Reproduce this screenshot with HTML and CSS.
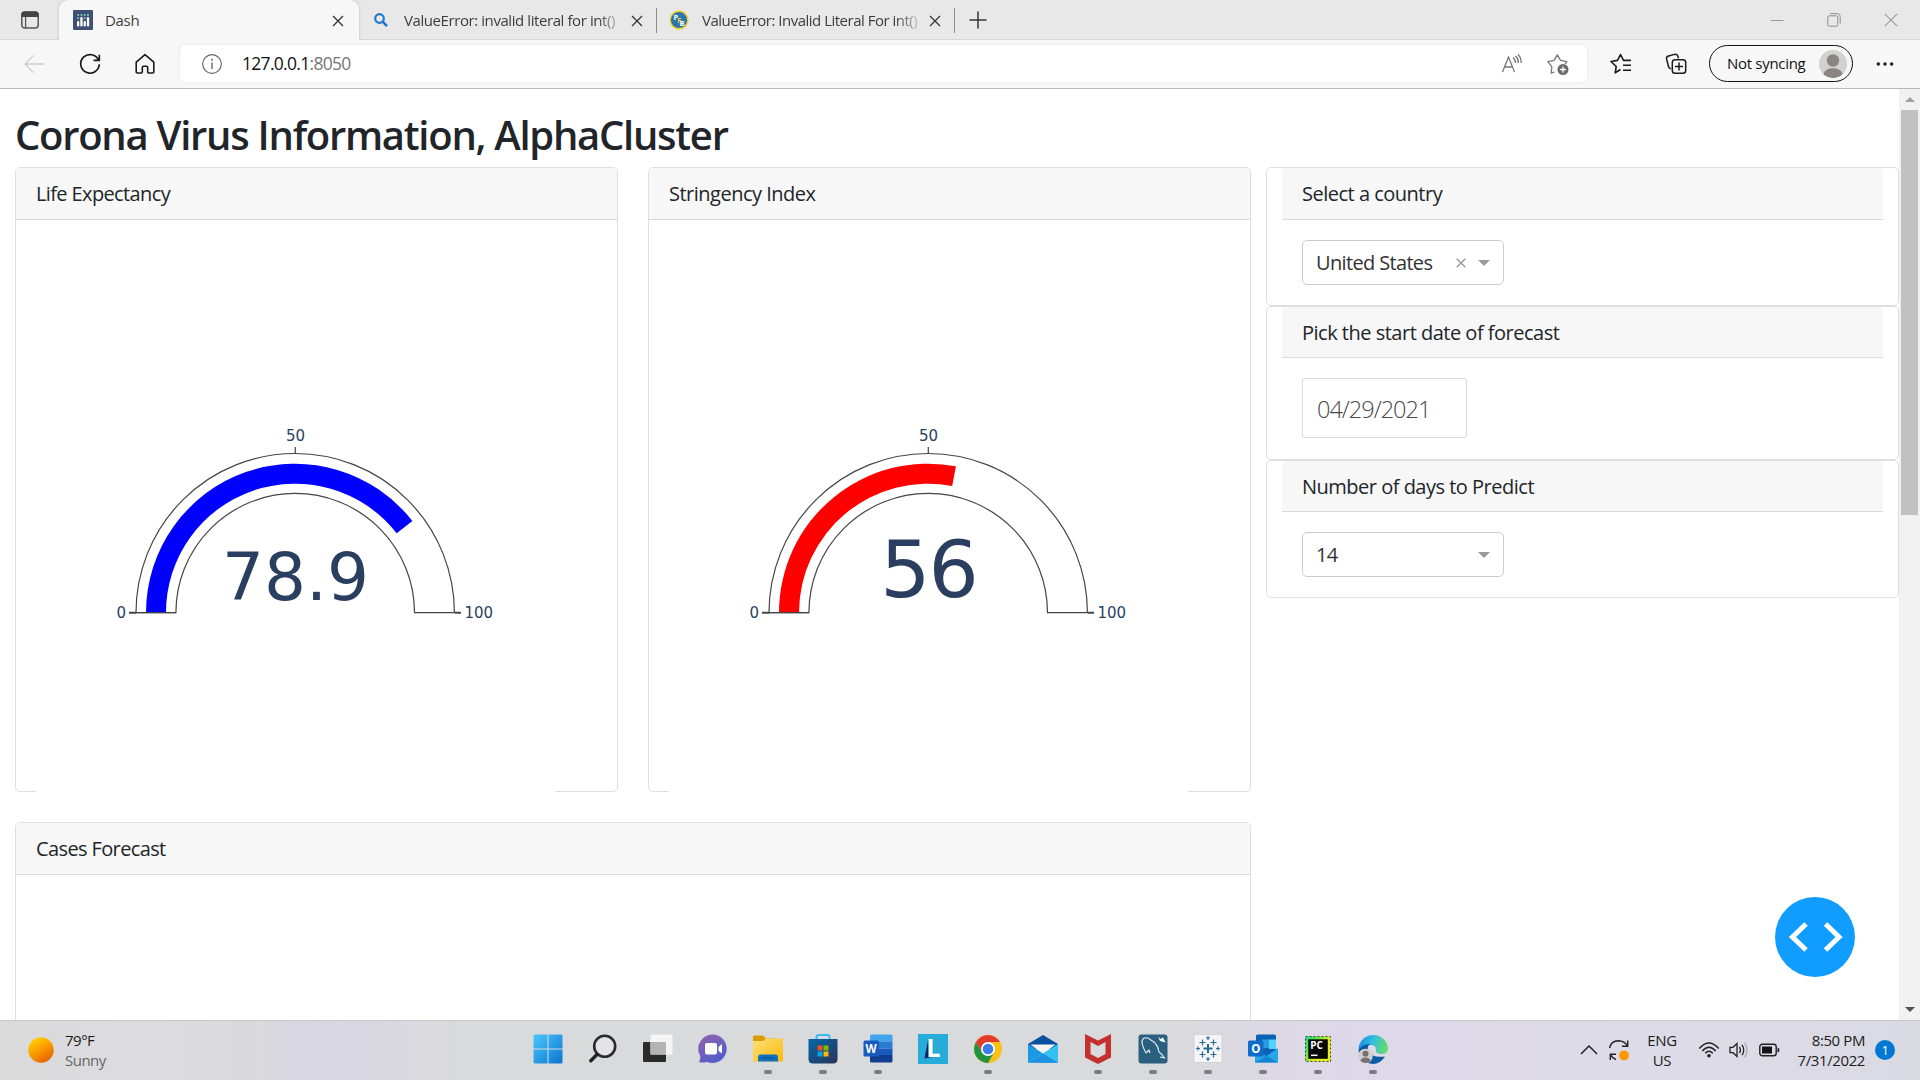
FILE: index.html
```
<!DOCTYPE html>
<html lang="en">
<head>
<meta charset="utf-8">
<title>Dash</title>
<link rel="stylesheet" href="styles.css">
</head>
<body>
<div class="screen">
  <header class="tabstrip">
    <div class="tab-actions">
      <svg width="20" height="20" viewBox="0 0 20 20"><rect x="1.8" y="2" width="16.4" height="16" rx="3" fill="none" stroke="#555" stroke-width="1.5"/><path d="M1.5 7V4.500Q1.500 1.500 4.500 1.500H15.500Q18.500 1.500 18.500 4.500V7Z" fill="#444"/><path d="M5.600 7V18" stroke="#555" stroke-width="1.300"/></svg>
    </div>
    <div class="tab tab-active">
      <svg class="favicon" width="20" height="20" viewBox="0 0 20 20"><rect width="20" height="20" rx="1" fill="#3f4f75"/><g fill="#fff"><rect x="4" y="11" width="2.300" height="5.500" rx="1"/><rect x="7.300" y="7" width="2.300" height="9.500" rx="1"/><rect x="10.600" y="11" width="2.300" height="5.500" rx="1"/><rect x="13.900" y="7" width="2.300" height="9.500" rx="1"/></g><g fill="#80cfbe"><circle cx="5.100" cy="5" r="1"/><circle cx="8.400" cy="5" r="1"/><circle cx="11.700" cy="5" r="1"/><circle cx="15" cy="5" r="1"/><circle cx="5.100" cy="8.300" r="1"/><circle cx="11.700" cy="8.300" r="1"/></g></svg>
      <span class="tab-title">Dash</span>
      <svg class="tab-close" width="12" height="12" viewBox="0 0 12 12"><path d="M1 1L11 11M11 1L1 11" stroke="#333" stroke-width="1.300"/></svg>
    </div>
    <div class="tab">
      <svg class="favicon" width="20" height="20" viewBox="0 0 20 20"><circle cx="8.500" cy="8.500" r="4.300" fill="none" stroke="#1a78d0" stroke-width="2.200"/><path d="M11.800 11.800L16 16.200" stroke="#1a78d0" stroke-width="2.600"/></svg>
      <span class="tab-title tab-faded tab-second">ValueError: invalid literal for int()</span>
      <svg class="tab-close" width="12" height="12" viewBox="0 0 12 12"><path d="M1 1L11 11M11 1L1 11" stroke="#333" stroke-width="1.300"/></svg>
    </div>
    <div class="tab">
      <svg class="favicon" width="20" height="20" viewBox="0 0 20 20"><circle cx="10" cy="10" r="8.900" fill="#2f74ae" stroke="#f5d32f" stroke-width="1.600"/><text x="4.600" y="9.600" font-size="7.500" class="icon-letter">P</text><text x="8.200" y="12.600" font-size="7" fill="#f5d32f" font-family="Open Sans, sans-serif" font-weight="700">F</text><text x="10.600" y="15.800" font-size="7.500" class="icon-letter">B</text></svg>
      <span class="tab-title tab-faded tab-third">ValueError: Invalid Literal For int()</span>
      <svg class="tab-close" width="12" height="12" viewBox="0 0 12 12"><path d="M1 1L11 11M11 1L1 11" stroke="#333" stroke-width="1.300"/></svg>
    </div>
    <svg class="new-tab" width="18" height="18" viewBox="0 0 18 18"><path d="M9 0.500V17.500M0.500 9H17.500" stroke="#333" stroke-width="1.500"/></svg>
    <div class="window-buttons">
      <svg width="14" height="14" viewBox="0 0 14 14"><path d="M0.500 7.500H13.500" stroke="#999" stroke-width="1"/></svg>
      <svg width="14" height="14" viewBox="0 0 14 14"><rect x="0.800" y="2.800" width="10" height="10.400" rx="1.500" fill="none" stroke="#8c8c8c"/><path d="M3.200 0.700H10.500Q13.200 0.700 13.200 3.400V10.500" fill="none" stroke="#8c8c8c"/></svg>
      <svg width="14" height="14" viewBox="0 0 14 14"><path d="M0.800 0.800L13.200 13.200M13.200 0.800L0.800 13.200" stroke="#999" stroke-width="1.100"/></svg>
    </div>
  </header>

  <nav class="toolbar">
    <div class="nav-buttons">
      <svg width="24" height="24" viewBox="0 0 24 24" fill="none" stroke="#cfcfcf" stroke-width="1.400"><path d="M22 12H3M11.500 3.500L3 12L11.500 20.500"/></svg>
      <svg width="24" height="24" viewBox="0 0 24 24" fill="none" stroke="#1b1b1b" stroke-width="1.700"><path d="M20.600 8.300A9.300 9.300 0 1 0 21.300 12.300M21.300 2.700V8.300H15.500"/></svg>
      <svg width="24" height="24" viewBox="0 0 24 24" fill="none" stroke="#1b1b1b" stroke-width="1.600" stroke-linejoin="round"><path d="M3.200 10.200L12 2.700L20.800 10.200V20Q20.800 21 19.800 21H15.700Q14.700 21 14.700 20V15.500Q14.700 14.200 13.400 14.200H10.600Q9.300 14.200 9.300 15.500V20Q9.300 21 8.300 21H4.200Q3.200 21 3.200 20Z"/></svg>
    </div>
    <div class="address">
      <svg width="22" height="22" viewBox="0 0 22 22"><circle cx="11" cy="11" r="9.300" fill="none" stroke="#666" stroke-width="1.200"/><circle cx="11" cy="6.800" r="1" fill="#666"/><path d="M11 9.500V16" stroke="#666" stroke-width="1.400"/></svg>
      <span class="url">127.0.0.1<span class="port">:8050</span></span>
      <svg class="read-aloud" width="22" height="22" viewBox="0 0 22 22" fill="none" stroke="#777" stroke-width="1.300"><path d="M1.500 19L7.500 4L13.500 19M3.600 14H11.400M12 4.500Q14.700 6.700 14.500 10M14.600 3Q17.600 5.800 17.300 10M17 1.500Q20.700 5 20 10"/></svg>
      <svg class="add-favorite" width="24" height="24" viewBox="0 0 24 24"><path d="M8.500 20L5.200 21.200L5.800 14.700L1.800 9.600L8 8.400L11.300 2.800L14.600 8.400L20.800 9.600L19 12" fill="none" stroke="#777" stroke-width="1.300" stroke-linejoin="round"/><circle cx="17" cy="17.500" r="5.500" fill="#6b6b6b"/><path d="M17 14.500V20.500M14 17.500H20" stroke="#fff" stroke-width="1.300"/></svg>
    </div>
    <svg class="favorites" width="24" height="24" viewBox="0 0 24 24" fill="none" stroke="#1b1b1b" stroke-width="1.600" stroke-linejoin="round"><path d="M11.500 17.500L6.200 20.800L7.200 14.500L2 9.500L8.500 8.400L11.500 2.500L14.500 8.400H22M14 13.300H22M14 18.300H22"/></svg>
    <svg class="collections" width="24" height="24" viewBox="0 0 24 24" fill="none" stroke="#1b1b1b" stroke-width="1.500"><path d="M7 17L4.800 15.500L2.600 7.200Q2 4.700 4.500 4L10.500 2.400Q13 1.900 13.900 4.200L14.500 6.400"/><rect x="8.300" y="7.800" width="13.400" height="13.400" rx="2.800"/><path d="M15 10.500V18.500M11 14.500H19"/></svg>
    <div class="profile"><span>Not syncing</span>
      <svg width="28" height="28" viewBox="0 0 28 28"><circle cx="14" cy="14" r="14" fill="#d3d1ce"/><circle cx="14" cy="10.500" r="6.200" fill="#8a8583"/><path d="M4.300 24.100Q6.500 18.300 14 18.300T23.700 24.100A14 14 0 0 1 4.300 24.100Z" fill="#8a8583"/></svg>
    </div>
    <svg class="more" width="18" height="6" viewBox="0 0 18 6" fill="#1b1b1b"><circle cx="2.300" cy="3" r="1.700"/><circle cx="9" cy="3" r="1.700"/><circle cx="15.700" cy="3" r="1.700"/></svg>
  </nav>

  <main class="viewport">
    <div class="page">
      <h1 class="title">Corona Virus Information, AlphaCluster</h1>
      <div class="dashboard">
        <div class="left">
          <div class="gauges">
            <section class="card gauge-card">
              <h2 class="card-header hdr-life">Life Expectancy</h2>
              <div class="card-body">
                <svg class="plot" width="519" height="562" viewBox="0 0 519 562">
                  <rect width="519" height="562" fill="#fff"/>
                  <path d="M100 372.700A159.200 159.200 0 0 1 418.400 372.700H378.500A119.300 119.300 0 0 0 139.900 372.700Z" class="gauge-outline"/>
                  <path d="M110 372.700A149 149 0 0 1 376.400 281L360.700 293.300A129 129 0 0 0 130 372.700Z" fill="#00f"/>
                  <path d="M100 372.700H140M259.300 207V213.500" class="gauge-outline"/>
                  <path d="M93 372.700H100M419 372.700H425" class="gauge-tick"/>
                  <text x="80.500" y="377.700" class="tick-label">0</text>
                  <text x="259.500" y="200.500" text-anchor="middle" class="tick-label">50</text>
                  <text x="428.500" y="377.700" class="tick-label">100</text>
                  <text x="259.500" y="360.300" text-anchor="middle" class="gauge-value" font-size="66">78.9</text>
                </svg>
              </div>
            </section>
            <section class="card gauge-card">
              <h2 class="card-header">Stringency Index</h2>
              <div class="card-body">
                <svg class="plot" width="519" height="562" viewBox="0 0 519 562">
                  <rect width="519" height="562" fill="#fff"/>
                  <path d="M100 372.700A159.200 159.200 0 0 1 418.400 372.700H378.500A119.300 119.300 0 0 0 139.900 372.700Z" class="gauge-outline"/>
                  <path d="M110 372.700A149 149 0 0 1 286.900 226.300L283.200 246A129 129 0 0 0 130 372.700Z" fill="#f00"/>
                  <path d="M100 372.700H140M259.300 207V213.500" class="gauge-outline"/>
                  <path d="M93 372.700H100M419 372.700H425" class="gauge-tick"/>
                  <text x="80.500" y="377.700" class="tick-label">0</text>
                  <text x="259.500" y="200.500" text-anchor="middle" class="tick-label">50</text>
                  <text x="428.500" y="377.700" class="tick-label">100</text>
                  <text x="259.500" y="357.200" text-anchor="middle" class="gauge-value value-tight" font-size="79">56</text>
                </svg>
              </div>
            </section>
          </div>
          <section class="card forecast-card">
            <h2 class="card-header hdr-cases">Cases Forecast</h2>
          </section>
        </div>
        <aside class="controls">
          <section class="card control">
            <h2 class="card-header">Select a country</h2>
            <div class="control-body">
              <div class="select"><span>United States</span>
                <svg class="clear" width="10" height="10" viewBox="0 0 10 10"><path d="M0.700 0.700L9.300 9.300M9.300 0.700L0.700 9.300" stroke="#999" stroke-width="1.400"/></svg>
                <svg width="12" height="6" viewBox="0 0 12 6"><path d="M0 0H12L6 6Z" fill="#999"/></svg>
              </div>
            </div>
          </section>
          <section class="card control control-date">
            <h2 class="card-header">Pick the start date of forecast</h2>
            <div class="control-body"><div class="date">04/29/2021</div></div>
          </section>
          <section class="card control control-days">
            <h2 class="card-header">Number of days to Predict</h2>
            <div class="control-body">
              <div class="select"><span>14</span>
                <svg width="12" height="6" viewBox="0 0 12 6"><path d="M0 0H12L6 6Z" fill="#999"/></svg>
              </div>
            </div>
          </section>
        </aside>
      </div>
    </div>
    <div class="scrollbar">
      <svg width="10" height="5" viewBox="0 0 10 5"><path d="M5 0L10 5H0Z" fill="#a0a0a0"/></svg>
      <div class="thumb"></div>
      <svg width="10" height="5" viewBox="0 0 10 5"><path d="M0 0H10L5 5Z" fill="#505050"/></svg>
    </div>
    <button class="debug" aria-label="Debug menu"><svg width="80" height="80" viewBox="0 0 80 80"><path d="M31 27L17.500 40L31 53M50.500 27L64 40L50.500 53" fill="none" stroke="#fff" stroke-width="5"/></svg></button>
  </main>

  <footer class="taskbar">
    <div class="weather">
      <svg width="26" height="26" viewBox="0 0 26 26"><defs><linearGradient id="sun" x1=".2" y1="0" x2=".8" y2="1"><stop offset="0" stop-color="#ffd500"/><stop offset=".5" stop-color="#f99a00"/><stop offset="1" stop-color="#e35a00"/></linearGradient></defs><circle cx="13" cy="13" r="12.700" fill="url(#sun)"/></svg>
      <div><div>79°F</div><div class="muted">Sunny</div></div>
    </div>
    <div class="apps">
      <div class="app"><svg viewBox="0 0 32 32"><defs><linearGradient id="win" x1="0" y1="0" x2="1" y2="1"><stop offset="0" stop-color="#4cc8fb"/><stop offset="1" stop-color="#0a74d2"/></linearGradient></defs><path d="M1.500 3Q1.500 1.500 3 1.500H15.500V15.500H1.500ZM16.500 1.500H29Q30.500 1.500 30.500 3V15.500H16.500ZM1.500 16.500H15.500V30.500H3Q1.500 30.500 1.500 29ZM16.500 16.500H30.500V29Q30.500 30.500 29 30.500H16.500Z" fill="url(#win)"/></svg></div>
      <div class="app"><svg viewBox="0 0 32 32"><circle cx="17.700" cy="13.300" r="10.500" fill="#e4e4e6" stroke="#2b2b2b" stroke-width="2.600"/><path d="M10 21.500L3.800 27.800" stroke="#222" stroke-width="3.400" stroke-linecap="round"/></svg></div>
      <div class="app"><svg viewBox="0 0 32 32"><rect x="1" y="9" width="23" height="20" rx="1" fill="#2b2b29"/><rect x="8.500" y="1.500" width="22" height="20" rx="1" fill="#f5f5f5"/><path d="M8.500 9H24V21.500H8.500Z" fill="#b4b4b2"/></svg></div>
      <div class="app"><svg viewBox="0 0 32 32"><defs><linearGradient id="chat" x1=".2" y1="0" x2=".8" y2="1"><stop offset="0" stop-color="#9063ae"/><stop offset="1" stop-color="#4b5ccd"/></linearGradient></defs><path d="M16.500 1.500A14.300 14.300 0 1 1 10 29Q5 30 2 29Q4 25 3 22.500A14.300 14.300 0 0 1 16.500 1.500Z" fill="url(#chat)"/><rect x="8" y="10" width="12" height="11.500" rx="2" fill="#fff"/><path d="M21.500 14L25 11V20.500L21.500 18Z" fill="#fff"/></svg></div>
      <div class="app running"><svg viewBox="0 0 32 32"><defs><linearGradient id="fold" x1="0" y1="0" x2="1" y2="1"><stop offset="0" stop-color="#ffe27a"/><stop offset="1" stop-color="#fbb708"/></linearGradient></defs><path d="M1 4Q1 2.500 2.500 2.500H11L14 5.500H24V12H1Z" fill="#dc9a03"/><path d="M1 8H11L14 5.500H31V27Q31 28.500 29.500 28.500H1Z" fill="url(#fold)"/><path d="M6 28.500V24Q6 21.500 8.500 21.500H23.500Q26 21.500 26 24V28.500Z" fill="#0f6fc0"/><path d="M10 25H22.500" stroke="#084b8b"/></svg></div>
      <div class="app running"><svg viewBox="0 0 32 32"><defs><linearGradient id="store" x1="0" y1="0" x2="1" y2="1"><stop offset="0" stop-color="#0667ad"/><stop offset="1" stop-color="#293354"/></linearGradient></defs><path d="M9.500 7V4Q9.500 2 11.500 2H20.500Q22.500 2 22.500 4V7" fill="none" stroke="#32bdf2" stroke-width="2"/><path d="M1.500 6H30.500V26Q30.500 30.500 26 30.500H6Q1.500 30.500 1.500 26Z" fill="url(#store)"/><path d="M10.500 12.500H15.500V17.500H10.500Z" fill="#f25022"/><path d="M16.500 12.500H21.500V17.500H16.500Z" fill="#7fba00"/><path d="M10.500 18.500H15.500V23.500H10.500Z" fill="#00a4ef"/><path d="M16.500 18.500H21.500V23.500H16.500Z" fill="#ffb900"/></svg></div>
      <div class="app running"><svg viewBox="0 0 32 32"><path d="M8 3Q8 1.500 9.500 1.500H29Q30.500 1.500 30.500 3V8.500H8Z" fill="#41a5ee"/><path d="M8 8.500H30.500V15.500H8Z" fill="#2b7cd3"/><path d="M8 15.500H30.500V22H8Z" fill="#185abd"/><path d="M8 22H30.500V28Q30.500 29.500 29 29.500H9.500Q8 29.500 8 28Z" fill="#103f91"/><rect x="1.500" y="7.500" width="15.500" height="16" rx="1.500" fill="#185abd"/><text x="9" y="19.800" text-anchor="middle" font-size="11.500" class="icon-letter">W</text></svg></div>
      <div class="app"><svg viewBox="0 0 32 32"><rect x="1" y="1" width="30" height="30" fill="#25acd9"/><path d="M11 7L7.500 25.500L15 24Z" fill="#05265c"/><text x="9.200" y="23.800" font-size="25" class="icon-letter">L</text></svg></div>
      <div class="app running"><svg viewBox="0 0 32 32"><circle cx="16" cy="16" r="14" fill="#fbc116"/><path d="M3.900 9A14 14 0 0 1 28.100 9H16L10 19.500Z" fill="#e33b2e"/><path d="M3.900 9A14 14 0 0 0 16 30L22 19.500L16 22L10 19.500Z" fill="#229342"/><circle cx="16" cy="16" r="7" fill="#fff"/><circle cx="16" cy="16" r="5.300" fill="#3b7ded"/></svg></div>
      <div class="app"><svg viewBox="0 0 32 32"><path d="M1 11L16 2L31 11V16H1Z" fill="#0a4fa0"/><path d="M3.500 11.500H28.500L16 21Z" fill="#f3f3f3"/><path d="M1 11L16 20.500L1 29.800Z" fill="#1a9ae6"/><path d="M31 11V29.800H1Z" fill="#35c0f2"/><path d="M16 20.500L31 29.800H1Z" fill="#1e91e3"/></svg></div>
      <div class="app running"><svg viewBox="0 0 32 32"><path d="M3 1L16 7.500L29 1V24.500L16 31L3 24.500ZM8.500 9V21L16 25L23.500 21V9L16 13Z" fill="#c3302d" fill-rule="evenodd"/></svg></div>
      <div class="app running"><svg viewBox="0 0 32 32"><rect x="1.500" y="1.500" width="29" height="29" rx="3" fill="#2a5f80"/><path d="M9 20Q3 9 6 6Q9 3 14 7Q21 11 22 19Q25 21 27.500 25L23 24M9 20L12 17L13 20" fill="none" stroke="#e9f1f5" stroke-width="1.100"/><path d="M21 3.500L23.500 6L26 4.500L28.500 9.500L23 8Z" fill="#fff"/></svg></div>
      <div class="app running"><svg viewBox="0 0 32 32"><rect x="2" y="1.500" width="28" height="28" fill="#f4f5f6" stroke="#ccc" stroke-width=".7"/><g stroke="#2c6a91" stroke-width="1.500"><path d="M16 11V20M11.500 15.500H20.500" stroke-width="2"/><path d="M10.500 6.500V12.500M7.500 9.500H13.500M21.500 6.500V12.500M18.500 9.500H24.500M10.500 18.500V24.500M7.500 21.500H13.500M21.500 18.500V24.500M18.500 21.500H24.500M16 3V7M14 5H18M16 24V28M14 26H18M6 13.500V17.500M4 15.500H8M26 13.500V17.500M24 15.500H28" stroke-width="1.200"/></g></svg></div>
      <div class="app running"><svg viewBox="0 0 32 32"><rect x="9" y="1.500" width="20" height="22" rx="1.500" fill="#0a62b5"/><path d="M15 6.500H22V15H15Z" fill="#2a9ae6"/><path d="M22 6.500H29V16H22Z" fill="#51d3fa"/><path d="M8 16L19.500 23L31 15V29Q31 29.500 29.500 29.500H8Z" fill="#25a7ea"/><path d="M19.500 23L31 29.500H8Z" fill="#1683d5"/><rect x="1" y="7.500" width="15.500" height="16" rx="1.500" fill="#0f6cc9"/><text x="8.800" y="19.600" text-anchor="middle" font-size="11.500" class="icon-letter">O</text></svg></div>
      <div class="app running"><svg viewBox="0 0 32 32"><defs><linearGradient id="pc" x1="0" y1="0" x2=".7" y2=".5"><stop offset="0" stop-color="#21d789"/><stop offset=".45" stop-color="#55e34a"/><stop offset="1" stop-color="#e5ee1e"/></linearGradient></defs><rect x="3.500" y="3.500" width="25" height="25" fill="url(#pc)" stroke="#222" stroke-width=".8" stroke-dasharray="2 2"/><rect x="6.300" y="6.300" width="19.500" height="19.500" fill="#080808"/><text x="8.200" y="16" font-size="10" class="icon-letter">PC</text><path d="M9 22.300H15.500" stroke="#fff" stroke-width="1.500"/></svg></div>
      <div class="app running"><svg viewBox="0 0 32 32"><defs><linearGradient id="edge" x1="0" y1=".3" x2="1" y2=".5"><stop offset="0" stop-color="#168ddc"/><stop offset=".5" stop-color="#34c1de"/><stop offset="1" stop-color="#65dc66"/></linearGradient></defs><path d="M1.500 17A14.800 14.800 0 0 1 31 15Q31 21 24.500 21Q18 21 19 17Q19 12 14 12Q7 12 1.500 17Z" fill="url(#edge)"/><path d="M1.500 17Q6 10 13 11Q10 13 11 18Q14 25 28 23.500Q23 31 16 31Q3 30 1.500 17Z" fill="#0c59a4"/><circle cx="8.500" cy="23" r="7.300" fill="#cfcecd"/><circle cx="8.500" cy="20.700" r="3" fill="#77716e"/><path d="M3.500 28Q4 24.500 8.500 24.500T13.500 28Q8.500 32 3.500 28Z" fill="#77716e"/></svg></div>
    </div>
    <div class="tray">
      <svg width="18" height="10" viewBox="0 0 18 10"><path d="M1 9L9 1L17 9" fill="none" stroke="#222" stroke-width="1.500"/></svg>
      <svg class="sync" width="22" height="22" viewBox="0 0 22 22" fill="none" stroke="#222" stroke-width="1.400"><path d="M1.500 9Q3 1.800 10.500 1.800Q16.500 2 19.500 7M19.700 1.500V7.300H14M8 20.500Q4.500 19.500 2.500 15.500M2.300 21V15.300H8"/><circle cx="16" cy="16.500" r="5" fill="#ff9800" stroke="none"/></svg>
      <div class="lang"><div>ENG</div><div>US</div></div>
      <svg class="wifi" width="22" height="18" viewBox="0 0 22 18" fill="none" stroke="#222" stroke-width="1.400"><path d="M1.300 7.500Q11-3.500 20.700 7.500M4.300 10Q11 2.500 17.700 10M7.200 12.300Q11 8.200 14.800 12.300"/><circle cx="11" cy="14.800" r="1.800" fill="#222" stroke="none"/></svg>
      <svg class="volume" width="20" height="18" viewBox="0 0 20 18" fill="none" stroke="#222" stroke-width="1.300"><path d="M1 6.300H4L8 2.500V15.500L4 11.700H1Z"/><path d="M10.500 6Q12.500 9 10.500 12M13 3.800Q16.500 9 13 14.200"/><path d="M15.500 1.500Q20.500 9 15.500 16.500" stroke="#aaa"/></svg>
      <svg class="battery" width="21" height="14" viewBox="0 0 21 14"><rect x=".8" y="1.300" width="16.400" height="11.400" rx="2.500" fill="none" stroke="#222" stroke-width="1.400"/><rect x="3" y="3.500" width="10" height="7" fill="#151515"/><path d="M18.500 4.500Q20.500 5 20.500 7T18.500 9.500Z" fill="#222"/></svg>
      <div class="clock"><div>8:50 PM</div><div>7/31/2022</div></div>
      <div class="badge">1</div>
    </div>
  </footer>
</div>
</body>
</html>
```
FILE: styles.css
```
* { box-sizing: border-box; }
body { margin: 0; font-family: "Open Sans", "Noto Sans", sans-serif; color: #212529; }
svg { display: block; flex: none; }
h1, h2 { margin: 0; }
.screen { width: 1920px; height: 1080px; overflow: hidden; display: grid; grid-template-rows: 40px 49px 931px 60px; background: #fff; }
.icon-letter { font-family: "Open Sans", sans-serif; font-weight: 700; fill: #fff; }

/* browser tabs */
.tabstrip { display: flex; align-items: center; background: #e8e8e8; box-shadow: inset 0 -1px #d6d6d6; font-size: 15px; letter-spacing: -.3px; white-space: nowrap; color: #3d3d3d; }
.tab-actions { width: 59px; padding-left: 20px; }
.tab { display: flex; align-items: center; width: 298px; height: 25px; padding: 0 13px 0 12px; border-right: 1px solid #8d8d8d; }
.tab-active { width: 300px; height: 40px; padding: 0 15px 0 14px; border: 0; border-radius: 9px 9px 0 0; background: #f7f7f7; box-shadow: 0 0 3px #bbb; clip-path: inset(0 -4px 0 -4px); }
.tab-title { margin-left: 12px; padding-bottom: 1px; }
.tab-faded { width: 220px; margin-left: 13px; -webkit-mask-image: linear-gradient(90deg, #000 88%, transparent 101%); mask-image: linear-gradient(90deg, #000 88%, transparent 101%); }
.tab-second { letter-spacing: -.42px; }
.tab-third { letter-spacing: -.5px; }
.tab-close { margin-left: auto; position: relative; top: 1px; }
.new-tab { margin-left: 14px; }
.window-buttons { display: flex; gap: 43px; margin: 0 22px 0 auto; }

/* toolbar */
.toolbar { display: flex; align-items: center; padding-bottom: 1px; background: #f7f7f7; border-bottom: 1px solid #b8b8b8; font-size: 17.500px; }
.nav-buttons { display: flex; gap: 31.500px; width: 180px; padding-left: 22px; }
.address { display: flex; align-items: center; width: 1407px; height: 37px; padding: 0 17px 0 21px; background: #fff; border-radius: 5px; box-shadow: 0 0 3px #e2e2e2; }
.url { margin-left: 19px; padding-bottom: 1px; color: #111; letter-spacing: -.7px; }
.port { color: #767676; }
.read-aloud { margin-left: auto; }
.add-favorite { margin-left: 23px; }
.favorites { margin-left: 22px; }
.collections { margin-left: 31px; }
.profile { display: flex; align-items: center; justify-content: space-between; width: 144px; height: 37px; margin-left: 21px; padding: 0 5px 0 17px; border: 1.500px solid #111; border-radius: 19px; color: #111; font-size: 15px; letter-spacing: -.3px; white-space: nowrap; }
.profile span { padding-bottom: 2px; }
.more { margin-left: 23px; }

/* page */
.viewport { position: relative; display: flex; overflow: hidden; }
.page { width: 1899px; padding: 16px 0 0 15px; }
.title { height: 62px; line-height: 60px; font-size: 40px; font-weight: 600; white-space: nowrap; letter-spacing: -1.270px; }
.dashboard { display: flex; gap: 15px; }
.left { width: 1236px; display: grid; gap: 30px; }
.gauges { display: flex; gap: 30px; }
.card { border: 1px solid #dfdfdf; border-radius: 5px; background: #fff; }
.card-header { height: 52px; padding: 0 20px; border-bottom: 1px solid #dadada; border-radius: 4px 4px 0 0; background: #f7f7f7; font-size: 20px; font-weight: 400; line-height: 51px; letter-spacing: -.5px; white-space: nowrap; }
.hdr-life, .hdr-cases { letter-spacing: -.620px; }
.gauge-card { width: 603px; height: 625px; }
.card-body { padding: 20px; }
.forecast-card { height: 240px; }
.gauge-outline { fill: none; stroke: #444; stroke-width: 1.200; }
.gauge-tick { stroke: #444; stroke-width: 2; }
.tick-label, .gauge-value { font-family: "DejaVu Sans", sans-serif; fill: #2a3f5f; }
.tick-label { font-size: 15px; }
.value-tight { letter-spacing: -2px; }

.controls { width: 633px; }
.control { height: 139px; padding: 0 15px; }
.control-date { height: 154px; }
.control-days { height: 138px; }
.control-date .card-header, .control-days .card-header { height: 51px; }
.control-body { padding: 20px; }
.select { display: flex; align-items: center; width: 202px; height: 45px; padding: 0 13px; border: 1px solid #ccc; border-radius: 5px; font-size: 20px; letter-spacing: -.650px; color: #333; }
.select svg:last-child { margin-left: auto; }
.clear { margin-left: 24px; }
.date { width: 165px; height: 60px; padding-left: 14px; border: 1px solid #dbdbdb; border-radius: 3px; font-size: 23.500px; font-weight: 300; line-height: 61px; letter-spacing: -1px; color: #484848; }

.scrollbar { width: 21px; display: grid; grid-template-rows: 21px 1fr 21px; justify-items: center; align-items: center; background: #f1f1f1; }
.thumb { align-self: start; width: 17px; height: 405px; background: #c1c1c1; }
.debug { position: absolute; left: 1775px; top: 808px; width: 80px; height: 80px; padding: 0; border: 0; border-radius: 50%; background: #119dff; }

/* taskbar */
.taskbar { display: flex; align-items: center; padding-bottom: 2px; border-top: 1px solid #c8c8cb; background: linear-gradient(90deg, #dadada 0, #dcdbe0 8%, #d9d9dd 13%, #d9d7e3 17%, #d9dadc 25%, #d9dadc 60%, #ddd8e8 70%, #dedbe8 82%, #dadae3 100%); font-size: 15px; line-height: 20px; color: #1c1c1c; }
.weather { display: flex; align-items: center; gap: 11px; width: 520px; padding-left: 28px; letter-spacing: -.5px; }
.muted { color: #666; }
.apps { display: flex; }
.app { display: flex; flex-direction: column; align-items: center; width: 55px; height: 57px; padding-top: 12px; }
.app svg { width: 32px; height: 32px; overflow: visible; }
.running::after { content: ""; width: 8px; height: 4px; margin-top: 5px; border-radius: 2px; background: #7b7b7d; }
.tray { display: flex; align-items: center; margin: 0 25px 0 auto; letter-spacing: -.4px; }
.sync { margin-left: 10px; }
.lang { width: 40px; margin-left: 12px; text-align: center; }
.wifi { margin-left: 16px; }
.volume { margin-left: 9px; }
.battery { margin-left: 10px; }
.clock { width: 85px; text-align: right; white-space: nowrap; }
.badge { width: 20px; height: 20px; margin-left: 10px; border-radius: 50%; background: #0078d4; color: #fff; text-align: center; font-size: 13px; }
```
